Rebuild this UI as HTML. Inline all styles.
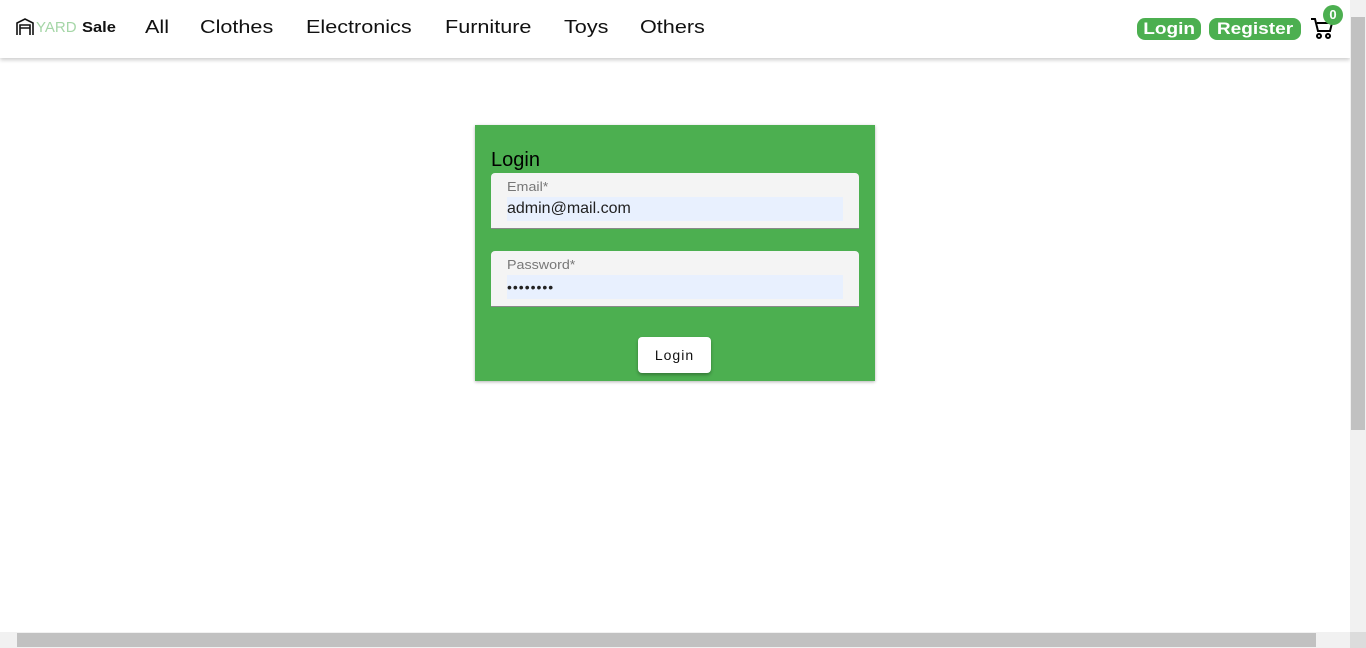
<!DOCTYPE html>
<html><head><meta charset="utf-8"><style>
*{box-sizing:border-box;margin:0;padding:0}
html,body{width:1366px;height:648px;overflow:hidden;background:#fff;font-family:"Liberation Sans",sans-serif}
.nav{position:absolute;left:0;top:0;width:1350px;height:58px;background:#fff;box-shadow:0 2px 4px rgba(0,0,0,.2)}
.logo{position:absolute;left:16px;top:18px;display:flex;align-items:center;font-size:15px}
.logo .y{color:#a5d6a7;margin-left:2px}
.logo .s{color:#111;font-weight:bold;margin-left:5px;display:inline-block;transform:scaleX(1.1);transform-origin:left}
.links a{position:absolute;top:17px;font-size:18px;color:#111;text-decoration:none;transform:scaleX(1.2);transform-origin:left;white-space:nowrap}
.pill{position:absolute;top:18px;height:22px;background:#4caf50;color:#fff;border-radius:8px;font-weight:bold;font-size:17px;line-height:22px;text-align:center}
.pill span{display:inline-block;transform:scaleX(1.12)}
.card{position:absolute;left:475px;top:125px;width:400px;height:256px;background:#4caf50;box-shadow:0 1px 3px rgba(0,0,0,.3)}
.card h2{position:absolute;left:16px;top:24px;font-size:20px;font-weight:normal;color:#000}
.field{position:absolute;left:16px;width:368px;height:56px;background:#f4f4f4;border-radius:4px 4px 0 0;border-bottom:1px solid #888}
.field label{position:absolute;left:16px;top:6px;font-size:13px;color:#777;transform:scaleX(1.1);transform-origin:left}
.field .in{position:absolute;left:16px;top:24px;width:336px;height:24px;background:#e8f0fe;font-size:16px;color:#222;line-height:24px}
.btn{position:absolute;left:163px;top:212px;width:73px;height:36px;background:#fff;border-radius:4px;box-shadow:0 2px 3px rgba(0,0,0,.3);font-size:14px;letter-spacing:1px;text-align:center;line-height:36px;color:#111}
.vs{position:absolute;left:1350px;top:0;width:16px;height:632px;background:#f1f1f1}
.vt{position:absolute;left:1351px;top:17px;width:14px;height:413px;background:#c1c1c1}
.hs{position:absolute;left:0;top:632px;width:1350px;height:16px;background:#f1f1f1}
.ht{position:absolute;left:17px;top:633px;width:1299px;height:14px;background:#c1c1c1}
.corner{position:absolute;left:1350px;top:632px;width:16px;height:16px;background:#dcdcdc}
</style></head><body>
<div class="nav">
 <div class="logo"><svg width="18" height="18" viewBox="0 0 18 18" fill="none" stroke="#111" stroke-width="1.6"><path d="M1 17V5L9 1l8 4v12M4 17V7h10v10M4 10h10"/></svg><span class="y">YARD</span><span class="s">Sale</span></div>
 <div class="links"><a style="left:145px">All</a><a style="left:200px">Clothes</a><a style="left:306px">Electronics</a><a style="left:445px">Furniture</a><a style="left:564px">Toys</a><a style="left:640px">Others</a></div>
 <div class="pill" style="left:1137px;width:64px"><span>Login</span></div>
 <div class="pill" style="left:1209px;width:92px"><span>Register</span></div>
 <svg style="position:absolute;left:1310px;top:16px" width="24" height="24" viewBox="0 0 24 24" fill="none" stroke="#000" stroke-width="2"><path d="M1 3h4l3 12h12l2-8H7"/><circle cx="9" cy="20" r="2"/><circle cx="18" cy="20" r="2"/></svg>
 <div style="position:absolute;left:1323px;top:5px;width:20px;height:20px;border-radius:50%;background:#4caf50;color:#fff;font-weight:bold;font-size:13px;text-align:center;line-height:20px">0</div>
</div>
<div class="card">
 <h2>Login</h2>
 <div class="field" style="top:48px"><label>Email*</label><div class="in">admin@mail.com</div></div>
 <div class="field" style="top:126px"><label>Password*</label><div class="in" style="font-size:14px;letter-spacing:1px">••••••••</div></div>
 <div class="btn">Login</div>
</div>
<div class="vs"></div><div class="vt"></div><div class="hs"></div><div class="ht"></div><div class="corner"></div>
</body></html>
